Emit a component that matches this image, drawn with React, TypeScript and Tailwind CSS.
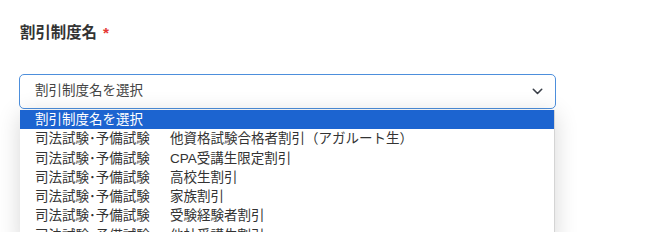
import React from "react";

const options = [
  "他資格試験合格者割引（アガルート生）",
  "CPA受講生限定割引",
  "高校生割引",
  "家族割引",
  "受験経験者割引",
  "他社受講生割引",
];

export default function App() {
  return (
    <div
      className="relative h-[232px] w-[650px] overflow-hidden bg-white"
      style={{ fontFamily: '"Liberation Sans", "Noto Sans CJK JP", sans-serif' }}
    >
      <div className="px-[19px] pt-[23px]">
        <div className="flex items-center pl-[1px] text-[15.4px] font-bold leading-[20px] text-[#333333]">
          <span>割引制度名</span>
          <span className="ml-[6px] text-[#e53935]">*</span>
        </div>
        <div className="relative mt-[31px] w-[537px]">
          <div className="flex h-[35px] items-center justify-between rounded-[5px] border-[1.5px] border-[#4d8fdc] pl-[15px] pr-[12px] text-[13.5px] text-[#444444]">
            <span>割引制度名を選択</span>
            <svg width="11" height="7" viewBox="0 0 11 7" fill="none">
              <path d="M1.3 1.3 L5.5 5.5 L9.7 1.3" stroke="#3a3f48" strokeWidth="1.6" strokeLinecap="round" strokeLinejoin="round" />
            </svg>
          </div>
          <div className="absolute left-[1px] top-[36px] w-[535px] border-r border-[#d4d4d4] bg-white shadow-[0_4px_22px_rgba(0,0,0,0.16)]">
            <div className="h-[19.3px] bg-[#1c64d0] pl-[15px] text-[13.5px] leading-[19.3px] text-white">
              割引制度名を選択
            </div>
            {options.map((o) => (
              <div key={o} className="flex h-[19.3px] whitespace-nowrap pl-[15px] text-[13.5px] leading-[19.3px] text-[#333333]">
                <span className="inline-block w-[135px]">司法試験･予備試験</span>
                <span>{o}</span>
              </div>
            ))}
          </div>
        </div>
      </div>
    </div>
  );
}
